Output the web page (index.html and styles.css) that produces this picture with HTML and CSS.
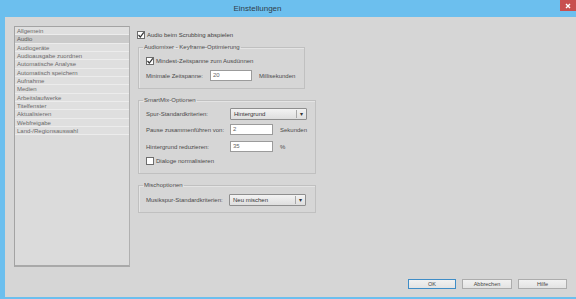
FILE: index.html
```html
<!DOCTYPE html>
<html lang="de">
<head>
<meta charset="utf-8">
<title>Einstellungen</title>
<link rel="stylesheet" href="styles.css">
</head>
<body>
<div class="window">
  <div class="titlebar">
    <span class="title">Einstellungen</span>
    <div class="close"><svg width="6" height="6" viewBox="0 0 6 6"><path d="M1 1L5 5M5 1L1 5" stroke="#fff" stroke-width="1.4"/></svg></div>
  </div>
  <div class="content">
    <div class="panes">
      <ul class="nav">
        <li>Allgemein</li>
        <li class="sel">Audio</li>
        <li>Audiogeräte</li>
        <li>Audioausgabe zuordnen</li>
        <li>Automatische Analyse</li>
        <li>Automatisch speichern</li>
        <li>Aufnahme</li>
        <li>Medien</li>
        <li>Arbeitslaufwerke</li>
        <li>Titelfenster</li>
        <li>Aktualisieren</li>
        <li>Webfreigabe</li>
        <li>Land-/Regionsauswahl</li>
      </ul>
      <div class="main">
        <div class="row check-row top-check">
          <span class="cb"><svg width="8" height="8" viewBox="0 0 8 8"><path d="M1.5 4L3.3 6L6.8 1.3" fill="none" stroke="#333" stroke-width="1.2"/></svg></span>
          <span>Audio beim Scrubbing abspielen</span>
        </div>

        <fieldset class="group g1">
          <legend>Audiomixer - Keyframe-Optimierung</legend>
          <div class="row check-row r-first">
            <span class="cb"><svg width="8" height="8" viewBox="0 0 8 8"><path d="M1.5 4L3.3 6L6.8 1.3" fill="none" stroke="#333" stroke-width="1.2"/></svg></span>
            <span>Mindest-Zeitspanne zum Ausdünnen</span>
          </div>
          <div class="row field-row r-second">
            <span class="lbl w64">Minimale Zeitspanne:</span>
            <span class="input w42">20</span>
            <span class="unit">Millisekunden</span>
          </div>
        </fieldset>

        <fieldset class="group g2">
          <legend>SmartMix-Optionen</legend>
          <div class="row field-row r-s1">
            <span class="lbl w84">Spur-Standardkriterien:</span>
            <span class="select"><span class="sel-text">Hintergrund</span><span class="arrow">▾</span></span>
          </div>
          <div class="row field-row r-s2">
            <span class="lbl w84">Pause zusammenführen von:</span>
            <span class="input w43">2</span>
            <span class="unit">Sekunden</span>
          </div>
          <div class="row field-row r-s3">
            <span class="lbl w84">Hintergrund reduzieren:</span>
            <span class="input w43">35</span>
            <span class="unit">%</span>
          </div>
          <div class="row check-row r-s4">
            <span class="cb"></span>
            <span>Dialoge normalisieren</span>
          </div>
        </fieldset>

        <fieldset class="group g3">
          <legend>Mischoptionen</legend>
          <div class="row field-row r-m1">
            <span class="lbl w83">Musikspur-Standardkriterien:</span>
            <span class="select"><span class="sel-text">Neu mischen</span><span class="arrow">▾</span></span>
          </div>
        </fieldset>
      </div>
    </div>
    <div class="footer">
      <button class="btn default w48">OK</button>
      <button class="btn w50">Abbrechen</button>
      <button class="btn w49">Hilfe</button>
    </div>
  </div>
</div>
</body>
</html>
```

FILE: styles.css
```css
* { box-sizing: border-box; }
html, body { margin: 0; padding: 0; }
body {
  font-family: "Liberation Sans", Arial, sans-serif;
  font-size: 6px;
  color: #4a4a4a;
  background: #6cbfee;
}
.window {
  width: 576px;
  height: 299px;
  background: #6cbfee;
  display: flex;
  flex-direction: column;
  overflow: hidden;
}
.titlebar {
  height: 17px;
  display: flex;
  align-items: flex-start;
  flex: none;
}
.title {
  flex: 1;
  text-align: center;
  padding-right: 45px;
  font-size: 8px;
  line-height: 17px;
  color: #2f3d4a;
}
.close {
  width: 16px;
  height: 11px;
  background: #c84f4f;
  display: flex;
  align-items: center;
  justify-content: center;
}
.close svg { display: block; }
.content {
  margin-left: 5px;
  height: 280px;
  background: #d6d6d6;
  display: flex;
  flex-direction: column;
  flex: none;
}
.panes {
  display: flex;
  padding: 9px 0 0 9px;
}
.nav {
  list-style: none;
  margin: 0;
  padding: 0;
  width: 116px;
  height: 241px;
  background: #dbdbdb;
  border: 1px solid #a3a3a3;
  border-bottom: 2px solid #a9a9a9;
  border-right-color: #b0b0b0;
}
.nav li {
  height: 8.33px;
  line-height: 8px;
  padding-left: 2px;
  color: #6a6a6a;
  background: #dfdfdf;
  border-bottom: 1px solid #ececec;
  white-space: nowrap;
}
.nav li.sel { background: #cbcbcb; color: #5a5a5a; }
.main {
  margin-left: 7px;
  display: flex;
  flex-direction: column;
}
.row {
  display: flex;
  align-items: center;
  white-space: nowrap;
}
.check-row { height: 10px; gap: 2px; }
.cb {
  width: 8px;
  height: 8px;
  background: #fff;
  border: 1px solid #6d6d6d;
  display: flex;
  align-items: center;
  justify-content: center;
}
.cb svg { display: block; margin: -1px; }
.top-check { margin-top: 4px; color: #3f3f3f; }
.group {
  margin: 3px 0 0 1px;
  padding: 0 7px 7px 7px;
  border: 1px solid #c0c0c0;
  box-shadow: inset 1px 1px 0 #e4e4e4;
  min-width: 0;
}
.group legend {
  padding: 0 1px;
  margin-left: -3px;
  font-size: 6px;
  line-height: 8px;
  color: #4a4a4a;
}
.g1 { width: 167px; }
.g2 { width: 178px; margin-top: 7px; }
.g3 { width: 178px; margin-top: 7px; }
.r-first { margin-top: 5px; }
.r-second { margin-top: 4px; }
.r-s1 { margin-top: 4px; }
.r-s2 { margin-top: 5px; }
.r-s3 { margin-top: 6px; }
.r-s4 { margin-top: 4px; }
.r-m1 { margin-top: 5px; }
.field-row { height: 11px; }
.lbl { flex: none; }
.w64 { width: 64px; }
.w84 { width: 84px; }
.w83 { width: 83px; }
.input {
  height: 11px;
  background: #fff;
  border: 1px solid #9b9b9b;
  line-height: 9px;
  padding-left: 2px;
  color: #666;
  flex: none;
}
.w42 { width: 42px; }
.w43 { width: 43px; }
.unit { margin-left: 7px; }
.select {
  width: 77px;
  height: 12px;
  border: 1px solid #8e8e8e;
  border-radius: 1px;
  background: linear-gradient(#f3f3f3, #dedede);
  display: flex;
  align-items: center;
  color: #333;
  flex: none;
}
.sel-text { flex: 1; padding-left: 3px; }
.arrow {
  width: 10px;
  height: 8px;
  border-left: 1px solid #a8a8a8;
  font-size: 6px;
  line-height: 8px;
  text-align: center;
  color: #333;
}
.footer {
  display: flex;
  justify-content: flex-end;
  gap: 6px;
  padding-right: 9px;
  margin-top: 12px;
}
.btn {
  height: 10px;
  padding: 0;
  margin: 0;
  font-family: inherit;
  font-size: 5.5px;
  line-height: 8px;
  color: #444;
  background: linear-gradient(#f1f1f1, #e3e3e3);
  border: 1px solid #acacac;
  border-radius: 0;
}
.btn.default { border-color: #3f8dc7; }
.w48 { width: 48px; }
.w50 { width: 50px; }
.w49 { width: 49px; }
```
